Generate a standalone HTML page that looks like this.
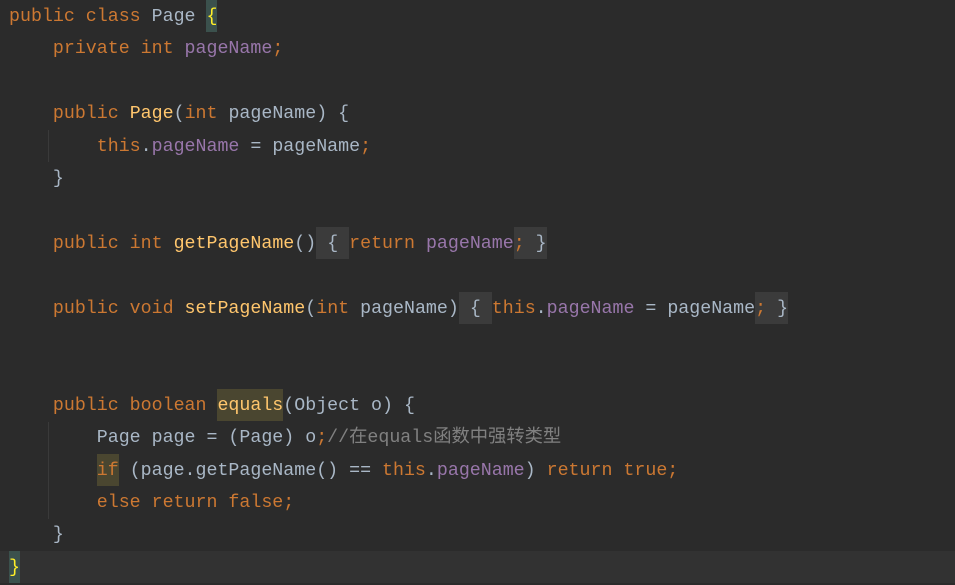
<!DOCTYPE html>
<html><head><meta charset="utf-8"><style>
html,body{margin:0;padding:0;background:#2b2b2b;width:955px;height:585px;overflow:hidden}
.l{position:absolute;left:9px;height:32.4px;line-height:34px;white-space:pre;font-family:"Liberation Mono","Noto Sans CJK SC",monospace;font-size:18.3px;color:#a9b7c6}
.k{color:#cc7832}.f{color:#9876aa}.m{color:#ffc66d}.c{color:#808080}
.b,.h,.br{display:inline-block;height:32px;vertical-align:top}
.b{background:#3b3b3b}.h{background:#4a4630}
.br{background:#3b514d;color:#ffef28}
.cur{position:absolute;left:0;top:551px;width:955px;height:32px;background:#323232}
.g{position:absolute;left:48px;width:1px;background:#3a3a3a}
</style></head><body>
<div class="cur"></div>
<div class="g" style="top:130px;height:32px"></div>
<div class="g" style="top:422px;height:97px"></div>
<div class="l" style="top:0"><span class="k">public class </span>Page <span class="br">{</span></div>
<div class="l" style="top:32.4px">    <span class="k">private int </span><span class="f">pageName</span><span class="k">;</span></div>
<div class="l" style="top:97.2px">    <span class="k">public </span><span class="m">Page</span>(<span class="k">int </span>pageName) {</div>
<div class="l" style="top:129.6px">        <span class="k">this</span>.<span class="f">pageName</span> = pageName<span class="k">;</span></div>
<div class="l" style="top:162px">    }</div>
<div class="l" style="top:226.8px">    <span class="k">public int </span><span class="m">getPageName</span>()<span class="b"> { </span><span class="k">return </span><span class="f">pageName</span><span class="b"><span class="k">;</span> }</span></div>
<div class="l" style="top:291.6px">    <span class="k">public void </span><span class="m">setPageName</span>(<span class="k">int </span>pageName)<span class="b"> { </span><span class="k">this</span>.<span class="f">pageName</span> = pageName<span class="b"><span class="k">;</span> }</span></div>
<div class="l" style="top:388.8px">    <span class="k">public boolean </span><span class="m h">equals</span>(Object o) {</div>
<div class="l" style="top:421.2px">        Page page = (Page) o<span class="k">;</span><span class="c">//在equals函数中强转类型</span></div>
<div class="l" style="top:453.6px">        <span class="k h">if</span> (page.getPageName() == <span class="k">this</span>.<span class="f">pageName</span>) <span class="k">return true;</span></div>
<div class="l" style="top:486px">        <span class="k">else return false;</span></div>
<div class="l" style="top:518.4px">    }</div>
<div class="l" style="top:551px"><span class="br">}</span></div>
</body></html>
